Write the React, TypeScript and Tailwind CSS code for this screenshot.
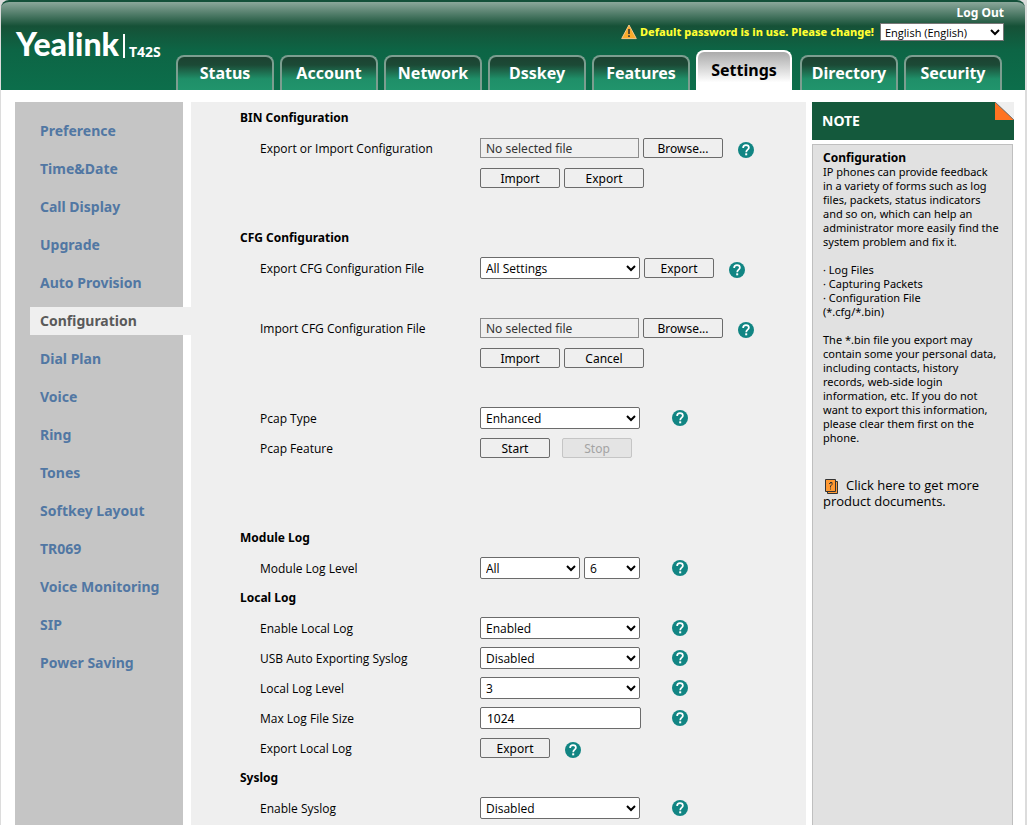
import type { ReactNode } from "react";

const tabs = [
  "Status",
  "Account",
  "Network",
  "Dsskey",
  "Features",
  "Settings",
  "Directory",
  "Security",
];

const menuItems = [
  "Preference",
  "Time&Date",
  "Call Display",
  "Upgrade",
  "Auto Provision",
  "Configuration",
  "Dial Plan",
  "Voice",
  "Ring",
  "Tones",
  "Softkey Layout",
  "TR069",
  "Voice Monitoring",
  "SIP",
  "Power Saving",
];

const activeTab = "Settings";
const activeItem = "Configuration";

function HelpIcon() {
  return (
    <svg className="h-4 w-4 shrink-0" viewBox="0 0 16 16" aria-hidden="true">
      <circle cx="8" cy="8" r="8" fill="#118583" />
      <path
        d="M5.100 6C5.100 4.100 6.300 3.200 8 3.200s2.900 1 2.900 2.500c0 2-2.700 2.100-2.700 4.500"
        fill="none"
        stroke="#fff"
        strokeWidth="1.7"
      />
      <rect x="7.200" y="11.300" width="2" height="2" fill="#fff" />
    </svg>
  );
}

interface ButtonProps {
  children: ReactNode;
  wide?: boolean;
  disabled?: boolean;
}

function Button({ children, wide, disabled }: ButtonProps) {
  return (
    <button
      type="button"
      disabled={disabled}
      className={`h-5 shrink-0 rounded-[2px] border pt-px text-xs leading-[18px] ${
        wide ? "w-20" : "w-[70px]"
      } ${
        disabled
          ? "border-[#c5c5c5] bg-[#e4e4e4] text-[#a3a3a3]"
          : "border-[#6b6b6b] bg-[#efefef] text-black"
      }`}
    >
      {children}
    </button>
  );
}

interface SelectProps {
  id: string;
  options: string[];
  width?: string;
  label?: string;
}

function Select({ id, options, width = "w-40", label }: SelectProps) {
  return (
    <select
      id={id}
      aria-label={label}
      className={`h-[22px] shrink-0 rounded-[2px] border border-[#6b6b6b] bg-white px-px font-['Open_Sans',sans-serif] text-xs text-black ${width}`}
    >
      {options.map((option) => (
        <option key={option}>{option}</option>
      ))}
    </select>
  );
}

function FileBox({ id }: { id: string }) {
  return (
    <input
      id={id}
      type="text"
      readOnly
      value="No selected file"
      className="h-5 w-[159px] shrink-0 border border-[#8c8c8c] bg-[#efefef] px-[5px] text-xs text-[#333]"
    />
  );
}

function Heading({ children }: { children: ReactNode }) {
  return (
    <h2 className="flex h-[30px] items-center text-xs font-bold">{children}</h2>
  );
}

interface RowProps {
  label?: string;
  htmlFor?: string;
  children?: ReactNode;
}

function Row({ label, htmlFor, children }: RowProps) {
  return (
    <div className="flex h-[30px] items-center">
      <div className="w-60 shrink-0 pt-0.5 pl-5 font-['Open_Sans',sans-serif]">
        {label && <label htmlFor={htmlFor}>{label}</label>}
      </div>
      {children}
    </div>
  );
}

// Drop-downs and text boxes keep their help icon in one column
function Field({ children }: { children: ReactNode }) {
  return (
    <>
      <div className="flex w-48 shrink-0 items-center gap-1">{children}</div>
      <HelpIcon />
    </>
  );
}

// Buttons have the help icon right behind them
function Inline({ children }: { children: ReactNode }) {
  return (
    <div className="flex items-center gap-[15px]">
      <div className="flex items-center gap-1">{children}</div>
      <div className="pt-1">
        <HelpIcon />
      </div>
    </div>
  );
}

function Header() {
  return (
    <header className="flex h-[90px] rounded-t-lg border-t-2 border-[#14503a] bg-[linear-gradient(180deg,#8ba79b_0px,#165137_24px,#0d6545_48px,#0c6e4b_88px)]">
      <div className="flex w-[175px] shrink-0 items-start pt-6 pl-[15px] text-white">
        <span className="font-[Lato] text-[32px] leading-9 font-black">Yealink</span>
        <span className="mt-2 ml-1 h-6 w-0.5 shrink-0 bg-white" />
        <span className="mt-[18px] ml-1 text-sm leading-4 font-bold">T42S</span>
      </div>
      <div className="flex min-w-0 flex-1 flex-col">
        <div className="flex flex-col items-end pr-[21px]">
          <a href="#logout" className="mt-[3px] text-xs leading-4 font-bold text-white">
            Log Out
          </a>
          <div className="flex h-[22px] items-center">
            <svg className="h-4 w-4" viewBox="0 0 16 16" aria-hidden="true">
              <path
                d="M8 1 15.3 14.6H.7z"
                fill="#fbab2c"
                stroke="#f6c789"
                strokeLinejoin="round"
              />
              <path d="M8 5v5M8 11.3v1.7" stroke="#333" strokeWidth="1.6" />
            </svg>
            <span className="ml-[3px] text-[11px] font-extrabold text-[#ffff33]">
              Default password is in use. Please change!
            </span>
            <select
              aria-label="Language"
              className="ml-1.5 h-[18px] w-[124px] border border-[#767676] bg-white font-['Open_Sans',sans-serif] text-[11px] text-black"
            >
              <option>English (English)</option>
            </select>
          </div>
        </div>
        <nav className="mt-auto flex items-end gap-1.5">
          {tabs.map((tab) => (
            <a
              key={tab}
              href={`#${tab.toLowerCase()}`}
              className={`flex items-center justify-center rounded-t-lg border-x-2 border-t-2 pb-0.5 text-base font-bold ${
                tab === activeTab
                  ? "mr-0.5 h-10 w-24 border-white bg-linear-to-b from-[#ababab] to-white to-80% text-black"
                  : "h-[35px] w-[98px] border-[#7c9e90] bg-[linear-gradient(180deg,#1c4231_0px,#1c4a36_8px,#1f8f68_22px,#21946c_33px)] text-white"
              }`}
            >
              {tab}
            </a>
          ))}
        </nav>
      </div>
    </header>
  );
}

function Sidebar() {
  return (
    <nav className="flex w-[168px] shrink-0 flex-col gap-2.5 bg-[#c5c5c5] pt-[15px] pl-[15px]">
      {menuItems.map((item) => (
        <a
          key={item}
          href={`#${item.toLowerCase().replace(/\W/g, "-")}`}
          className={`flex h-7 items-center pl-2.5 text-sm font-bold ${
            item === activeItem
              ? "-mr-2 bg-[#efefef] text-[#5a5a5a]"
              : "text-[#5177a3]"
          }`}
        >
          {item}
        </a>
      ))}
    </nav>
  );
}

function Note() {
  return (
    <aside className="flex w-[202px] shrink-0 flex-col">
      <div className="flex h-[38px] items-start justify-between bg-[#14593c] pl-2.5">
        <h2 className="self-center text-sm font-bold text-white">NOTE</h2>
        <svg className="h-[18px] w-[19px]" viewBox="0 0 19 18" aria-hidden="true">
          <path d="M0 0h19v18z" fill="#efefef" />
          <path d="M0 0v18h19z" fill="#ff7322" />
          <path d="M0 0l19 18" stroke="#777" />
        </svg>
      </div>
      <div className="mr-px mt-1 flex-1 border border-b-0 border-[#bfbfbf] bg-[#e1e1e1] py-1.5 pr-1.5 pl-2.5 text-[11px] leading-[14px]">
        <h3 className="text-xs leading-[14px] font-bold">Configuration</h3>
        <p>
          IP phones can provide feedback
          <br />
          in a variety of forms such as log
          <br />
          files, packets, status indicators
          <br />
          and so on, which can help an administrator more easily find the system
          problem and fix it.
        </p>
        <ul className="my-3.5">
          <li>· Log Files</li>
          <li>· Capturing Packets</li>
          <li>
            · Configuration File
            <br />
            (*.cfg/*.bin)
          </li>
        </ul>
        <p>
          The *.bin file you export may
          <br />
          contain some your personal data, including contacts, history
          <br />
          records, web-side login
          <br />
          information, etc. If you do not
          <br />
          want to export this information,
          <br />
          please clear them first on the
          <br />
          phone.
        </p>
        <a
          href="#documents"
          className="mt-8 block font-['Open_Sans',sans-serif] text-[13px] leading-4"
        >
          <svg
            className="-my-1 mr-2 ml-0.5 inline-block h-[15px] w-[13px] align-middle"
            viewBox="0 0 13 15"
            aria-hidden="true"
          >
            <path d="M2.5 2.5h10v12h-10z" fill="#ff9933" stroke="#333" />
            <path d="M.5.5h10v12H.5z" fill="#ff9933" stroke="#333" />
            <path
              d="M4 4.5h1.5M5 3.5h2v2L5.5 7v1.500M5.500 9.500v1"
              fill="none"
              stroke="#333"
            />
          </svg>
          Click here to get more product documents.
        </a>
      </div>
    </aside>
  );
}

function Content() {
  return (
    <main className="min-w-0 flex-1 bg-[#efefef] pt-px pl-[49px]">
      <Heading>BIN Configuration</Heading>
      <Row label="Export or Import Configuration" htmlFor="bin-file">
        <Inline>
          <FileBox id="bin-file" />
          <Button wide>Browse...</Button>
        </Inline>
      </Row>
      <Row>
        <div className="flex gap-1">
          <Button wide>Import</Button>
          <Button wide>Export</Button>
        </div>
      </Row>
      <Row />
      <Heading>CFG Configuration</Heading>
      <Row label="Export CFG Configuration File" htmlFor="cfg-export">
        <Inline>
          <Select id="cfg-export" options={["All Settings", "Static Settings"]} />
          <Button>Export</Button>
        </Inline>
      </Row>
      <Row />
      <Row label="Import CFG Configuration File" htmlFor="cfg-file">
        <Inline>
          <FileBox id="cfg-file" />
          <Button wide>Browse...</Button>
        </Inline>
      </Row>
      <Row>
        <div className="flex gap-1">
          <Button wide>Import</Button>
          <Button wide>Cancel</Button>
        </div>
      </Row>
      <Row />
      <Row label="Pcap Type" htmlFor="pcap-type">
        <Field>
          <Select id="pcap-type" options={["Enhanced", "Common"]} />
        </Field>
      </Row>
      <Row label="Pcap Feature">
        <div className="flex gap-3">
          <Button>Start</Button>
          <Button disabled>Stop</Button>
        </div>
      </Row>
      <Row />
      <Row />
      <Heading>Module Log</Heading>
      <Row label="Module Log Level" htmlFor="module">
        <Field>
          <Select id="module" options={["All"]} width="w-[100px]" />
          <Select
            id="module-level"
            label="Level"
            options={["6", "5", "4", "3", "2", "1", "0"]}
            width="w-14"
          />
        </Field>
      </Row>
      <Heading>Local Log</Heading>
      <Row label="Enable Local Log" htmlFor="local-log">
        <Field>
          <Select id="local-log" options={["Enabled", "Disabled"]} />
        </Field>
      </Row>
      <Row label="USB Auto Exporting Syslog" htmlFor="usb-syslog">
        <Field>
          <Select id="usb-syslog" options={["Disabled", "Enabled"]} />
        </Field>
      </Row>
      <Row label="Local Log Level" htmlFor="local-level">
        <Field>
          <Select id="local-level" options={["3", "2", "1", "0"]} />
        </Field>
      </Row>
      <Row label="Max Log File Size" htmlFor="log-size">
        <Field>
          <input
            id="log-size"
            type="text"
            defaultValue="1024"
            className="h-[22px] w-[161px] rounded-[2px] border border-[#6b6b6b] bg-white px-1.5 text-xs"
          />
        </Field>
      </Row>
      <Row label="Export Local Log">
        <Inline>
          <Button>Export</Button>
        </Inline>
      </Row>
      <Heading>Syslog</Heading>
      <Row label="Enable Syslog" htmlFor="syslog">
        <Field>
          <Select id="syslog" options={["Disabled", "Enabled"]} />
        </Field>
      </Row>
    </main>
  );
}

export default function App() {
  return (
    <div className="min-h-screen bg-[#dcdcdc] pr-0.5 pl-px font-['Noto_Sans',sans-serif] text-xs text-black">
      <div className="flex min-h-screen flex-col rounded-t-lg bg-white">
        <Header />
        <div className="flex flex-1 pt-3 pr-[11px] pl-3.5">
          <Sidebar />
          <div className="ml-2 flex min-w-0 flex-1 gap-1.5">
            <Content />
            <Note />
          </div>
        </div>
      </div>
    </div>
  );
}
